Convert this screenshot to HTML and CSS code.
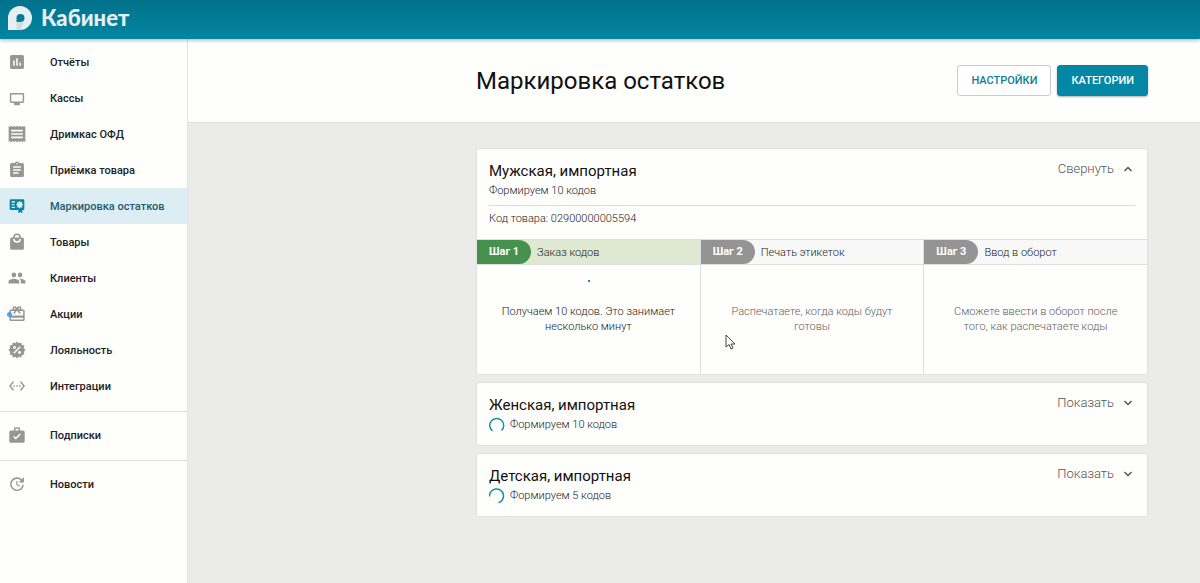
FILE: index.html
```
<!DOCTYPE html>
<html lang="ru">
<head>
    <meta charset="UTF-8">
    <meta name="viewport" content="width=device-width, initial-scale=1.0">
    <title>Кабинет</title>
    <link rel="stylesheet" href="styles.css">
</head>
<body>

    <header class="topbar">
        <a class="logo" href="#">
            <svg viewBox="0 0 24 24" width="24" height="24">
                <path fill="#e6eff1" fill-rule="evenodd" d="M0 24V12a12 12 0 1 1 12 12zM12.500 8a4 4 0 0 0-4 4v4h4a4 4 0 0 0 0-8z"/>
                <path fill="#b9cbd0" d="M8.500 16h4a4 4 0 0 0 3-1.300L13 24H8.500z" opacity="0.500"/>
            </svg>
            <span>Кабинет</span>
        </a>
    </header>

    <div class="layout">
        <nav class="sidebar">
            <a class="menu-item" href="#">
                <svg class="icon" viewBox="-1 -1 26 26"><path d="M19 3H5a2 2 0 0 0-2 2v14a2 2 0 0 0 2 2h14a2 2 0 0 0 2-2V5a2 2 0 0 0-2-2zM9 17H7v-7h2zm4 0h-2V7h2zm4 0h-2v-4h2z"/></svg>
                Отчёты
            </a>
            <a class="menu-item" href="#">
                <svg class="icon" viewBox="-2 -3 28 28"><path d="M20 4H4a2 2 0 0 0-2 2v10a2 2 0 0 0 2 2h4v3h8v-3h4a2 2 0 0 0 2-2V6a2 2 0 0 0-2-2zm0 12H4V6h16z"/></svg>
                Кассы
            </a>
            <a class="menu-item" href="#">
                <svg class="icon" viewBox="0 0 24 24"><path d="M19 17H5v-2h14zm0-4H5v-2h14zm0-4H5V7h14zM2 22l1.700-1.500L5.300 22 7 20.500 8.700 22l1.600-1.500L12 22l1.700-1.500 1.600 1.500 1.700-1.500 1.700 1.500 1.600-1.500L22 22V2l-1.700 1.500L18.700 2 17 3.500 15.300 2l-1.600 1.500L12 2l-1.700 1.500L8.700 2 7 3.500 5.300 2 3.700 3.500 2 2z"/></svg>
                Дримкас ОФД
            </a>
            <a class="menu-item" href="#">
                <svg class="icon" viewBox="-1 -1 26 26"><path d="M19 3h-4.200a3 3 0 0 0-5.600 0H5a2 2 0 0 0-2 2v14a2 2 0 0 0 2 2h14a2 2 0 0 0 2-2V5a2 2 0 0 0-2-2zm-7 0a1 1 0 1 1 0 2 1 1 0 0 1 0-2zm2 14H7v-2h7zm3-4H7v-2h10zm0-4H7V7h10z"/></svg>
                Приёмка товара
            </a>
            <a class="menu-item active" href="#">
                <svg class="icon" viewBox="-3 -2 30 30"><path fill-rule="evenodd" d="M3 3h18a2 2 0 0 1 2 2v12a2 2 0 0 1-2 2h-1v5l-3-2-3 2v-5H3a2 2 0 0 1-2-2V5a2 2 0 0 1 2-2zm1 3v2h5V6zm0 4v2h4v-2zm0 4v2h5v-2zM16 5l-1.400 2.200L12 6.500l.7 2.600L10.500 11l2.300 1.800-.8 2.700 2.700-.8L16 17l1.500-2.300 2.600.8-.7-2.700 2.100-1.800-2.100-1.800.7-2.700-2.600.7z"/></svg>
                Маркировка остатков
            </a>
            <a class="menu-item" href="#">
                <svg class="icon" viewBox="-1 -1 26 26"><path d="M19 6h-2A5 5 0 0 0 7 6H5a2 2 0 0 0-2 2v12a2 2 0 0 0 2 2h14a2 2 0 0 0 2-2V8a2 2 0 0 0-2-2zm-7-3a3 3 0 0 1 3 3H9a3 3 0 0 1 3-3zm0 10a5 5 0 0 1-5-5h2a3 3 0 0 0 6 0h2a5 5 0 0 1-5 5z"/></svg>
                Товары
            </a>
            <a class="menu-item" href="#">
                <svg class="icon" viewBox="-1 -1 26 26"><path d="M16 11a3 3 0 1 0 0-6 3 3 0 0 0 0 6zm-8 0a3 3 0 1 0 0-6 3 3 0 0 0 0 6zm0 2c-2.300 0-7 1.200-7 3.500V19h14v-2.500C15 14.200 10.300 13 8 13zm8 0-1 .1c1.200.8 2 2 2 3.400V19h6v-2.500c0-2.300-4.700-3.500-7-3.500z"/></svg>
                Клиенты
            </a>
            <a class="menu-item" href="#">
                <span class="icon-wrap">
                    <svg class="icon" viewBox="-1 -1 26 26"><path d="M20 6h-2.200A3 3 0 0 0 15 2c-1 0-2 .5-2.500 1.300L12 4l-.5-.7A3 3 0 0 0 6.200 6H4a2 2 0 0 0-2 2v11a2 2 0 0 0 2 2h16a2 2 0 0 0 2-2V8a2 2 0 0 0-2-2zm-5-2a1 1 0 1 1 0 2 1 1 0 0 1 0-2zM9 4a1 1 0 1 1 0 2 1 1 0 0 1 0-2zm11 15H4v-2h16zm0-5H4V8h5.100L7 10.800 8.600 12 12 7.400l3.400 4.600 1.600-1.200L14.900 8H20z"/></svg>
                    <span class="dot"></span>
                </span>
                Акции
            </a>
            <a class="menu-item" href="#">
                <svg class="icon" viewBox="-2 -2 28 28">
                    <path d="m12 0 2.500 2.600L17.800 1.400l1 3.500 3.600.9-1 3.500L24 12l-2.600 2.700 1 3.500-3.600.9-1 3.500-3.300-1.200L12 24l-2.500-2.600-3.300 1.200-1-3.500-3.600-.9 1-3.500L0 12l2.600-2.700-1-3.500 3.600-.9 1-3.500 3.300 1.200z"/>
                    <path d="m7.500 16.500 9-9" stroke="#fff" stroke-width="2"/>
                    <circle cx="8.500" cy="8.500" r="2" fill="#fff"/>
                    <circle cx="15.500" cy="15.500" r="2" fill="#fff"/>
                </svg>
                Лояльность
            </a>
            <a class="menu-item" href="#">
                <svg class="icon" viewBox="-2 -2 28 28"><path d="M7.800 6.800 6.200 5.500.8 12l5.400 6.500 1.600-1.300L3.400 12zM7 13h2v-2H7zm10-2h-2v2h2zm-6 2h2v-2h-2zm6.800-7.500-1.600 1.300 4.400 5.200-4.400 5.200 1.600 1.300 5.400-6.500z"/></svg>
                Интеграции
            </a>
            <hr class="divider">
            <a class="menu-item" href="#">
                <svg class="icon" viewBox="-1 -1 26 26"><path fill-rule="evenodd" d="M20 6h-4V4a2 2 0 0 0-2-2h-4a2 2 0 0 0-2 2v2H4a2 2 0 0 0-2 2v12a2 2 0 0 0 2 2h16a2 2 0 0 0 2-2V8a2 2 0 0 0-2-2zM10 4h4v2h-4zm.5 14L7 14.500l1.400-1.400 2.100 2.100 5.100-5.100L17 11.500z"/></svg>
                Подписки
            </a>
            <hr class="divider">
            <a class="menu-item" href="#">
                <svg class="icon" viewBox="-1 -1 26 26"><path d="M21 10.100h-6.800l2.700-2.800a7 7 0 1 0 2.100 5.700h2a9 9 0 1 1-2.700-7.300L21 3zM12.500 8v4.300l3.500 2-.7 1.200L11 13V8z"/></svg>
                Новости
            </a>
        </nav>

        <main class="main">
            <div class="page-header">
                <div class="content page-header-row">
                    <h1>Маркировка остатков</h1>
                    <div class="actions">
                        <button class="btn btn-outline" type="button">Настройки</button>
                        <button class="btn btn-primary" type="button">Категории</button>
                    </div>
                </div>
            </div>

            <div class="content cards">
                <section class="card open">
                    <div class="card-head">
                        <div>
                            <h2>Мужская, импортная</h2>
                            <p class="status">Формируем 10 кодов</p>
                        </div>
                        <button class="toggle" type="button">
                            Свернуть
                            <svg viewBox="0 0 10 6" width="10" height="6"><path d="m1.500 5 3.500-3.500L8.500 5"/></svg>
                        </button>
                    </div>
                    <p class="product-code">Код товара: 02900000005594</p>
                    <div class="steps">
                        <div class="step current">
                            <div class="step-head"><span class="step-badge">Шаг 1</span>Заказ кодов</div>
                            <div class="step-body">
                                <span class="progress-dot"></span>
                                <p>Получаем 10 кодов. Это занимает несколько минут</p>
                            </div>
                        </div>
                        <div class="step">
                            <div class="step-head"><span class="step-badge">Шаг 2</span>Печать этикеток</div>
                            <div class="step-body">
                                <p>Распечатаете, когда коды будут готовы</p>
                            </div>
                        </div>
                        <div class="step">
                            <div class="step-head"><span class="step-badge">Шаг 3</span>Ввод в оборот</div>
                            <div class="step-body">
                                <p>Сможете ввести в оборот после того, как распечатаете коды</p>
                            </div>
                        </div>
                    </div>
                </section>

                <section class="card">
                    <div class="card-head">
                        <div>
                            <h2>Женская, импортная</h2>
                            <p class="status">
                                <svg class="spinner" viewBox="0 0 16 16"><path d="M3.500 14A7 7 0 1 1 12.500 13.500"/></svg>
                                Формируем 10 кодов
                            </p>
                        </div>
                        <button class="toggle" type="button">
                            Показать
                            <svg viewBox="0 0 10 6" width="10" height="6"><path d="M1.500 1 5 4.500 8.500 1"/></svg>
                        </button>
                    </div>
                </section>

                <section class="card">
                    <div class="card-head">
                        <div>
                            <h2>Детская, импортная</h2>
                            <p class="status">
                                <svg class="spinner" viewBox="0 0 16 16"><path d="M.5 8.500A7 7 0 1 1 9.500 14.700"/></svg>
                                Формируем 5 кодов
                            </p>
                        </div>
                        <button class="toggle" type="button">
                            Показать
                            <svg viewBox="0 0 10 6" width="10" height="6"><path d="M1.500 1 5 4.500 8.500 1"/></svg>
                        </button>
                    </div>
                </section>
            </div>
        </main>
    </div>

    <!-- Mouse pointer over the page -->
    <svg class="cursor" viewBox="0 0 11 16" width="11" height="16"><path d="M1 1v12l3-2.500 2 4.500 2-1-2-4h4z"/></svg>

</body>
</html>
```
FILE: styles.css
```
* {
    box-sizing: border-box;
}
body {
    margin: 0;
    min-height: 100vh;
    display: flex;
    flex-direction: column;
    font-family: Roboto, "Liberation Sans", sans-serif;
    font-size: 11px;
    color: #333;
    background-color: #ebebea;
}
h1, h2, p {
    margin: 0;
    font-weight: 400;
}
button {
    font-family: inherit;
    cursor: pointer;
}

/* Top bar */
.topbar {
    position: relative;
    z-index: 1;
    display: flex;
    align-items: center;
    height: 39px;
    padding: 0 8px;
    background: linear-gradient(#02728b, #0485a2);
    box-shadow: 0 1px 4px rgba(0, 60, 75, 0.4);
}
.logo {
    display: flex;
    align-items: center;
    gap: 9px;
    margin-bottom: 4px;
    font-family: Lato, sans-serif;
    font-size: 22px;
    font-weight: 900;
    color: #e6eff1;
    text-decoration: none;
}

.layout {
    display: flex;
    flex: 1;
}

/* Sidebar */
.sidebar {
    flex: 0 0 188px;
    padding-top: 5px;
    background-color: #fefefd;
    border-right: 1px solid #e2e2e2;
}
.menu-item {
    display: flex;
    align-items: center;
    gap: 23px;
    height: 36px;
    padding-left: 7px;
    font-weight: 500;
    color: #222;
    text-decoration: none;
}
.menu-item.active {
    background-color: #dceef4;
    color: #1c5a70;
}
.icon {
    display: block;
    flex: none;
    width: 20px;
    height: 20px;
    fill: #969696;
}
.active .icon {
    fill: #0485a2;
}
.icon-wrap {
    position: relative;
}
.dot {
    position: absolute;
    left: 0;
    top: 8px;
    width: 5px;
    height: 5px;
    border-radius: 50%;
    background-color: #4aa3e6;
}
.divider {
    height: 1px;
    margin: 7px 0 5px;
    border: none;
    background-color: #dedede;
}

/* Main area */
.main {
    flex: 1;
}
.content {
    max-width: 724px;
    margin-left: auto;
    padding-right: 52px;
}
.page-header {
    background-color: #fefefd;
    border-bottom: 1px solid #e0e0e0;
}
.page-header-row {
    display: flex;
    align-items: center;
    justify-content: space-between;
    height: 83px;
}
h1 {
    font-size: 24px;
    color: #111;
}
.actions {
    display: flex;
    gap: 6px;
}
.btn {
    height: 31px;
    padding: 0 13px;
    border: 1px solid #ccc;
    border-radius: 3px;
    font-size: 11px;
    font-weight: 500;
    text-transform: uppercase;
}
.btn-outline {
    background-color: #fff;
    color: #0e7f98;
}
.btn-primary {
    border-color: #0487a5;
    background-color: #0487a5;
    color: #fff;
    box-shadow: 0 1px 2px rgba(0, 0, 0, 0.3);
}

/* Cards */
.cards {
    display: flex;
    flex-direction: column;
    gap: 7px;
    padding-top: 25px;
    font-weight: 300;
}
.card {
    overflow: hidden;
    background-color: #fefefd;
    border: 1px solid #e0e0e0;
    border-radius: 3px;
}
.card p {
    font-weight: 300;
}
.card-head {
    display: flex;
    align-items: flex-start;
    justify-content: space-between;
    margin: 0 12px;
    padding: 11px 0;
}
.open .card-head {
    padding-bottom: 5px;
}
h2 {
    font-size: 15px;
    line-height: 22px;
    color: #111;
}
.status {
    display: flex;
    align-items: center;
    gap: 5px;
    line-height: 18px;
    color: #222;
}
.spinner {
    width: 16px;
    height: 16px;
    fill: none;
    stroke: #12939f;
    stroke-width: 1.5;
}
.toggle {
    display: flex;
    align-items: center;
    gap: 9px;
    padding: 1px 2px 0 0;
    border: none;
    background: none;
    font-size: 13px;
    font-weight: 300;
    line-height: 16px;
    color: #555;
}
.toggle svg {
    fill: none;
    stroke: #555;
    stroke-width: 1.5;
}
.product-code {
    margin: 0 12px;
    padding: 5px 0 12px;
    border-top: 1px solid #dcdcdc;
    line-height: 16px;
    color: #222;
}

/* Steps */
.steps {
    display: flex;
    color: #222;
}
.step {
    flex: 1;
    border-left: 1px solid #e0e0e0;
}
.step:first-child {
    border-left: none;
}
.step-head {
    display: flex;
    align-items: center;
    gap: 6px;
    height: 26px;
    border-top: 1px solid #dedede;
    border-bottom: 1px solid #dedede;
    background-color: #f8f8f8;
}
.step-badge {
    padding: 0 12px;
    border-radius: 0 12px 12px 0;
    background-color: #949494;
    line-height: 24px;
    font-weight: 700;
    color: #fff;
}
.current .step-head {
    background-color: #dfe8d1;
}
.current .step-badge {
    background-color: #47914f;
}
.step-body {
    position: relative;
    height: 109px;
    padding: 39px 20px 0;
    line-height: 15px;
    text-align: center;
    color: #606060;
}
.current .step-body {
    color: #222;
}
.progress-dot {
    position: absolute;
    left: 50%;
    top: 15px;
    width: 2px;
    height: 2px;
    background-color: #12939f;
}

.cursor {
    position: absolute;
    left: 725px;
    top: 334px;
    fill: #fff;
    stroke: #444;
}
```
